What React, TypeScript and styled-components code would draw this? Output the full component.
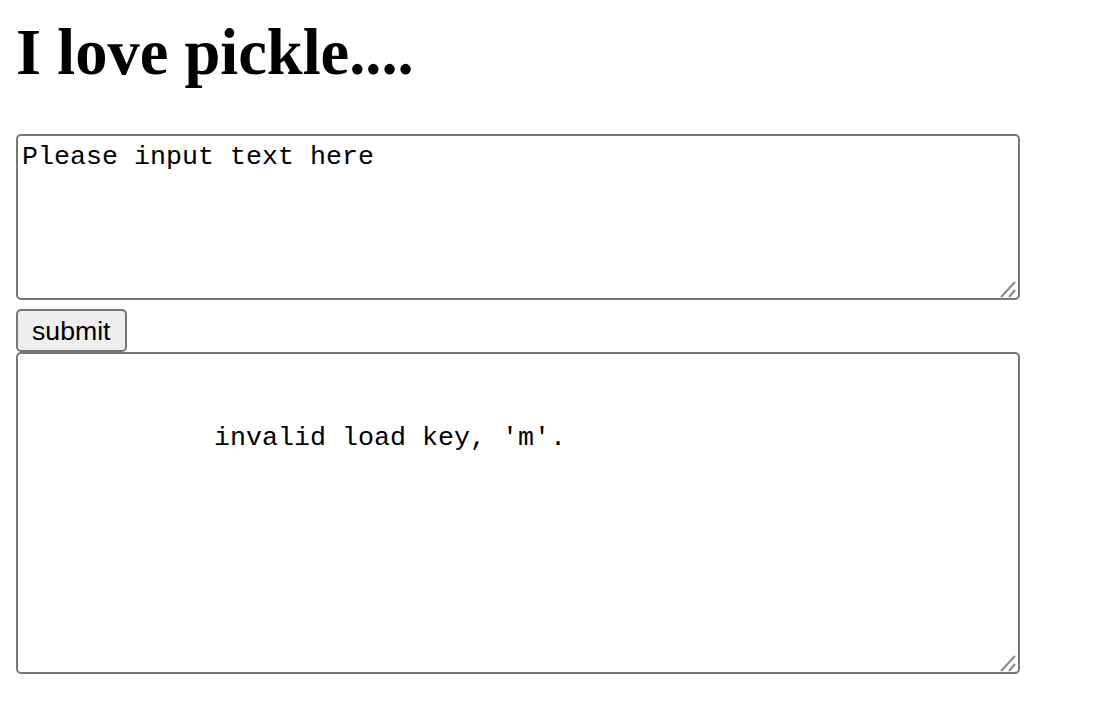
import React from "react";
import styled, { createGlobalStyle } from "styled-components";

const Global = createGlobalStyle`
  html, body { margin: 0; padding: 0; background: #fff; }
  body { padding: 16px; font-family: "Liberation Serif", "Times New Roman", serif; }
`;

const Page = styled.div`
  display: flex;
  flex-direction: column;
  align-items: flex-start;
`;

const Title = styled.h1`
  margin: 0 0 44px 0;
  font-family: "Liberation Serif", "Times New Roman", serif;
  font-weight: bold;
  font-size: 64.5px;
  line-height: 74px;
  color: #000;
`;

const Field = styled.div`
  position: relative;
  display: flex;
`;

const Area = styled.textarea<{ $h: number }>`
  box-sizing: border-box;
  width: 1004px;
  height: ${(p) => p.$h}px;
  margin: 0;
  padding: 6px 4px 4px 4px;
  border: 2px solid #767676;
  border-radius: 5px;
  background: #fff;
  color: #000;
  font-family: "Liberation Mono", "Courier New", monospace;
  font-size: 26.67px;
  line-height: 31.5px;
  resize: none;
  outline: none;
  overflow: hidden;
  white-space: pre-wrap;
`;

const Grip = styled.svg`
  position: absolute;
  right: 4px;
  bottom: 2px;
  width: 16px;
  height: 17px;
  pointer-events: none;
`;

const Button = styled.button`
  box-sizing: border-box;
  margin: 9px 0 0 0;
  height: 43px;
  padding: 0 14px;
  border: 2px solid #767676;
  border-radius: 5px;
  background: #efefef;
  color: #000;
  font-family: "Liberation Sans", Arial, sans-serif;
  font-size: 26.67px;
  line-height: 30px;
`;

const ResizeGrip = () => (
  <Grip viewBox="0 0 16 17">
    <line x1="1" y1="16" x2="15" y2="1" stroke="#8a8a8a" strokeWidth="2" />
    <line x1="9" y1="16" x2="15" y2="9" stroke="#8a8a8a" strokeWidth="2" />
  </Grip>
);

export default function App() {
  return (
    <>
      <Global />
      <Page>
        <Title>I love pickle....</Title>
        <Field>
          <Area $h={166} defaultValue="Please input text here" />
          <ResizeGrip />
        </Field>
        <Button>submit</Button>
        <Field>
          <Area $h={322} readOnly defaultValue={"\n\n            invalid load key, 'm'."} />
          <ResizeGrip />
        </Field>
      </Page>
    </>
  );
}
